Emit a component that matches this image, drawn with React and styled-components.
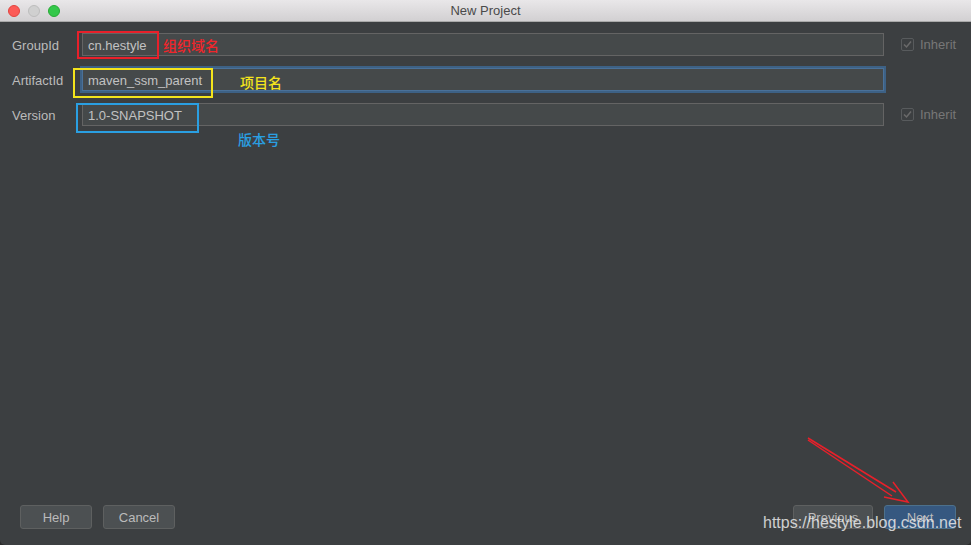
import React from "react";
import styled, { createGlobalStyle } from "styled-components";

const Global = createGlobalStyle`
  html, body { margin: 0; padding: 0; background: #2b2b2b; }
  body { font-family: "Liberation Sans", Arial, sans-serif; }
  * { box-sizing: border-box; }
`;

const Window = styled.div`
  position: relative;
  width: 971px;
  height: 545px;
  display: flex;
  flex-direction: column;
  background: #3c3f41;
  border-radius: 0 0 5px 5px;
  overflow: hidden;
`;

const TitleBar = styled.div`
  position: relative;
  height: 22px;
  flex: none;
  display: flex;
  align-items: center;
  justify-content: center;
  background: linear-gradient(#e9e7e9, #d2d0d2);
  border-bottom: 1px solid #a9a9a9;
  color: #4a4a4a;
  font-size: 13px;
`;

const Lights = styled.div`
  position: absolute;
  left: 8px;
  top: 5px;
  display: flex;
  gap: 8px;
`;

const Light = styled.span`
  width: 12px;
  height: 12px;
  border-radius: 50%;
  background: ${(p) => p.$c};
  border: 1px solid ${(p) => p.$b};
`;

const Body = styled.div`
  flex: 1;
  display: flex;
  flex-direction: column;
  justify-content: space-between;
  padding: 11px 0 16px;
`;

const Form = styled.div`
  display: grid;
  grid-template-columns: 70px 1fr 75px;
  row-gap: 12px;
  padding: 0 12px;
  align-items: center;
`;

const Label = styled.div`
  color: #bbbbbb;
  font-size: 13px;
  padding-top: 1px;
`;

const Field = styled.div`
  height: 23px;
  display: flex;
  align-items: center;
  padding: 1px 0 0 5px;
  background: #45494a;
  border: 1px solid ${(p) => (p.$focus ? "#4a7199" : "#646464")};
  box-shadow: ${(p) => (p.$focus ? "0 0 0 2px #3d6185" : "none")};
  color: #c2c2c2;
  font-size: 13px;
`;

const Inherit = styled.label`
  display: flex;
  align-items: center;
  gap: 6px;
  padding-left: 17px;
  color: #777777;
  font-size: 13px;
`;

const Check = styled.span`
  width: 13px;
  height: 13px;
  border: 1px solid #585b5d;
  border-radius: 2px;
  display: flex;
  align-items: center;
  justify-content: center;
`;

const Buttons = styled.div`
  display: flex;
  justify-content: space-between;
  padding: 0 15px 0 20px;
`;

const Group = styled.div`
  display: flex;
  gap: 11px;
`;

const Button = styled.div`
  width: ${(p) => p.$w || 72}px;
  height: 24px;
  display: flex;
  align-items: center;
  justify-content: center;
  border-radius: 3px;
  background: ${(p) => (p.$primary ? "#365880" : "#4c5052")};
  border: 1px solid ${(p) => (p.$primary ? "#4c708c" : "#5e6060")};
  color: #bbbbbb;
  font-size: 13px;
`;

const Mark = styled.div`
  position: absolute;
  left: ${(p) => p.$x}px;
  top: ${(p) => p.$y}px;
  width: ${(p) => p.$w}px;
  height: ${(p) => p.$h}px;
  border: 2px solid ${(p) => p.$c};
  pointer-events: none;
`;

const Note = styled.div`
  position: absolute;
  left: ${(p) => p.$x}px;
  top: ${(p) => p.$y}px;
  color: ${(p) => p.$c};
  font-family: "Noto Sans CJK SC", sans-serif;
  font-size: 14px;
  font-weight: 500;
  line-height: 1;
`;

const Watermark = styled.div`
  position: absolute;
  left: 763px;
  top: 515px;
  color: rgba(235, 235, 235, 0.85);
  font-size: 16px;
  line-height: 1;
  font-family: "Liberation Sans", Arial, sans-serif;
`;

const ArrowSvg = styled.svg`
  position: absolute;
  left: 0;
  top: 0;
  pointer-events: none;
`;

const CheckIcon = () => (
  <svg width="11" height="11" viewBox="0 0 11 11">
    <path d="M2 5.5 L4.5 8 L9 2.5" fill="none" stroke="#6a6a6a" strokeWidth="1.5" />
  </svg>
);

export default function App() {
  return (
    <>
      <Global />
      <Window>
        <TitleBar>
          <Lights>
            <Light $c="#fc5b57" $b="#e2443f" />
            <Light $c="#d0d0d0" $b="#bdbdbd" />
            <Light $c="#34c84a" $b="#27aa35" />
          </Lights>
          New Project
        </TitleBar>
        <Body>
          <Form>
            <Label>GroupId</Label>
            <Field>cn.hestyle</Field>
            <Inherit>
              <Check>
                <CheckIcon />
              </Check>
              Inherit
            </Inherit>
            <Label>ArtifactId</Label>
            <Field $focus>maven_ssm_parent</Field>
            <div />
            <Label>Version</Label>
            <Field>1.0-SNAPSHOT</Field>
            <Inherit>
              <Check>
                <CheckIcon />
              </Check>
              Inherit
            </Inherit>
          </Form>
          <Buttons>
            <Group>
              <Button>Help</Button>
              <Button>Cancel</Button>
            </Group>
            <Group>
              <Button $w={80}>Previous</Button>
              <Button $primary>Next</Button>
            </Group>
          </Buttons>
        </Body>

        <Mark $x={77} $y={31} $w={82} $h={28} $c="#e8202a" />
        <Note $x={163} $y={38} $c="#f0262b">组织域名</Note>
        <Mark $x={73} $y={68} $w={140} $h={30} $c="#f4e41c" />
        <Note $x={240} $y={75} $c="#f4e41c">项目名</Note>
        <Mark $x={76} $y={103} $w={123} $h={30} $c="#2a9fe2" />
        <Note $x={238} $y={132} $c="#2a9fe2">版本号</Note>

        <ArrowSvg width="971" height="545" viewBox="0 0 971 545">
          <g fill="none" stroke="#e8202a" strokeWidth="1.5" strokeLinejoin="miter">
            <path d="M808 438 L896 492" />
            <path d="M808 440 L892 496" />
            <path d="M893 482 L908 502 L884 497" />
          </g>
        </ArrowSvg>

        <Watermark>https://hestyle.blog.csdn.net</Watermark>
      </Window>
    </>
  );
}
